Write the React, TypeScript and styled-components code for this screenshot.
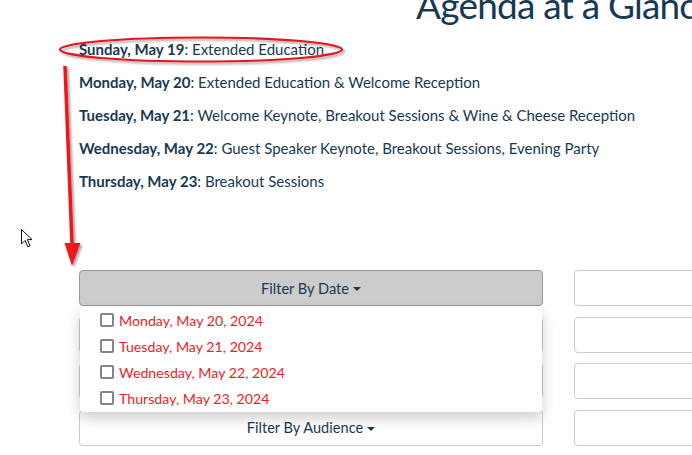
import * as React from "react";
import styled, { createGlobalStyle } from "styled-components";

const GlobalStyle = createGlobalStyle`
  html, body {
    margin: 0;
    padding: 0;
    background: #ffffff;
    overflow: hidden;
  }
  body {
    font-family: Lato, "Open Sans", sans-serif;
  }
`;

const navy = "#173a52";

const Page = styled.div`
  position: relative;
  width: 692px;
  height: 455px;
  overflow: hidden;
  color: ${navy};
`;

const Title = styled.h1`
  margin: -15px 0 0 416px;
  font-size: 37px;
  line-height: 40px;
  letter-spacing: -0.8px;
  font-weight: 400;
  white-space: nowrap;
  color: ${navy};
`;

const AgendaList = styled.ul`
  list-style: none;
  margin: 8px 0 0;
  padding: 0 0 0 79px;
`;

const AgendaItem = styled.li`
  height: 33px;
  line-height: 33px;
  font-size: 15px;
  white-space: nowrap;
  b {
    font-weight: 700;
  }
`;

const Filters = styled.div`
  display: grid;
  grid-template-columns: 464px 464px;
  grid-auto-rows: 36px;
  column-gap: 31px;
  row-gap: 10.5px;
  margin-top: 72px;
  padding-left: 79px;
`;

const Cell = styled.div`
  position: relative;
`;

const FilterButton = styled.button<{ $active?: boolean }>`
  box-sizing: border-box;
  width: 100%;
  height: 100%;
  display: flex;
  align-items: center;
  justify-content: center;
  gap: 4px;
  border: 1px solid ${(p) => (p.$active ? "#9a9a9a" : "#cccccc")};
  border-radius: 4px;
  background: ${(p) => (p.$active ? "#cccccc" : "#ffffff")};
  color: ${navy};
  font-family: Lato, "Open Sans", sans-serif;
  font-size: 14.6px;
  padding: 0;
`;

const Caret = styled.span`
  display: inline-block;
  width: 0;
  height: 0;
  border-left: 4px solid transparent;
  border-right: 4px solid transparent;
  border-top: 4px solid ${navy};
  margin-top: 2px;
`;

const Menu = styled.div`
  position: absolute;
  top: 37px;
  left: 1px;
  right: 1px;
  z-index: 2;
  background: #ffffff;
  border-radius: 0 0 4px 4px;
  box-shadow: 0 6px 14px rgba(0, 0, 0, 0.2);
  padding: 0 0 1px;
`;

const MenuItem = styled.label`
  display: flex;
  align-items: center;
  gap: 5px;
  height: 26px;
  padding-left: 20px;
  color: #ee1c25;
  font-size: 14.2px;
  white-space: nowrap;
`;

const Box = styled.span`
  box-sizing: border-box;
  flex: 0 0 14px;
  width: 14px;
  height: 14px;
  border: 2px solid #85838f;
  border-radius: 2px;
  background: #ffffff;
`;

const Overlay = styled.svg`
  position: absolute;
  left: 0;
  top: 0;
  pointer-events: none;
  z-index: 5;
`;

const days = [
  ["Sunday, May 19", "Extended Education"],
  ["Monday, May 20", "Extended Education & Welcome Reception"],
  ["Tuesday, May 21", "Welcome Keynote, Breakout Sessions & Wine & Cheese Reception"],
  ["Wednesday, May 22", "Guest Speaker Keynote, Breakout Sessions, Evening Party"],
  ["Thursday, May 23", "Breakout Sessions"],
];

const dates = [
  "Monday, May 20, 2024",
  "Tuesday, May 21, 2024",
  "Wednesday, May 22, 2024",
  "Thursday, May 23, 2024",
];

export default function App() {
  return (
    <Page>
      <GlobalStyle />
      <Title>Agenda at a Glance</Title>
      <AgendaList>
        {days.map(([d, t]) => (
          <AgendaItem key={d}>
            <b>{d}</b>: {t}
          </AgendaItem>
        ))}
      </AgendaList>
      <Filters>
        <Cell>
          <FilterButton $active>
            Filter By Date <Caret />
          </FilterButton>
          <Menu>
            {dates.map((d) => (
              <MenuItem key={d}>
                <Box />
                {d}
              </MenuItem>
            ))}
          </Menu>
        </Cell>
        <Cell>
          <FilterButton />
        </Cell>
        <Cell>
          <FilterButton>
            Filter By Session <Caret />
          </FilterButton>
        </Cell>
        <Cell>
          <FilterButton />
        </Cell>
        <Cell>
          <FilterButton>
            Filter By Track <Caret />
          </FilterButton>
        </Cell>
        <Cell>
          <FilterButton />
        </Cell>
        <Cell>
          <FilterButton>
            Filter By Audience <Caret />
          </FilterButton>
        </Cell>
        <Cell>
          <FilterButton />
        </Cell>
      </Filters>

      {/* annotation drawn on top of the screenshot */}
      <Overlay width="692" height="455" viewBox="0 0 692 455">
        <defs>
          <filter id="sh" x="-10%" y="-10%" width="130%" height="130%">
            <feDropShadow dx="2" dy="2" stdDeviation="1.2" floodColor="#000" floodOpacity="0.35" />
          </filter>
        </defs>
        <ellipse cx="201" cy="49.5" rx="141" ry="12" fill="none" stroke="#e8141c" strokeWidth="2.2" filter="url(#sh)" />
        <g filter="url(#sh)">
          <line x1="65" y1="66" x2="72" y2="244" stroke="#f0141c" strokeWidth="3.5" />
          <polygon points="64.5,243 80.5,243 72,266" fill="#f0141c" />
        </g>
        <path
          d="M21.5 229.5 L21.5 244 L25 240.5 L27.8 246.8 L30 245.8 L27.3 239.6 L32 239.6 Z"
          fill="#ffffff"
          stroke="#111111"
          strokeWidth="1"
          strokeLinejoin="round"
        />
      </Overlay>
    </Page>
  );
}
